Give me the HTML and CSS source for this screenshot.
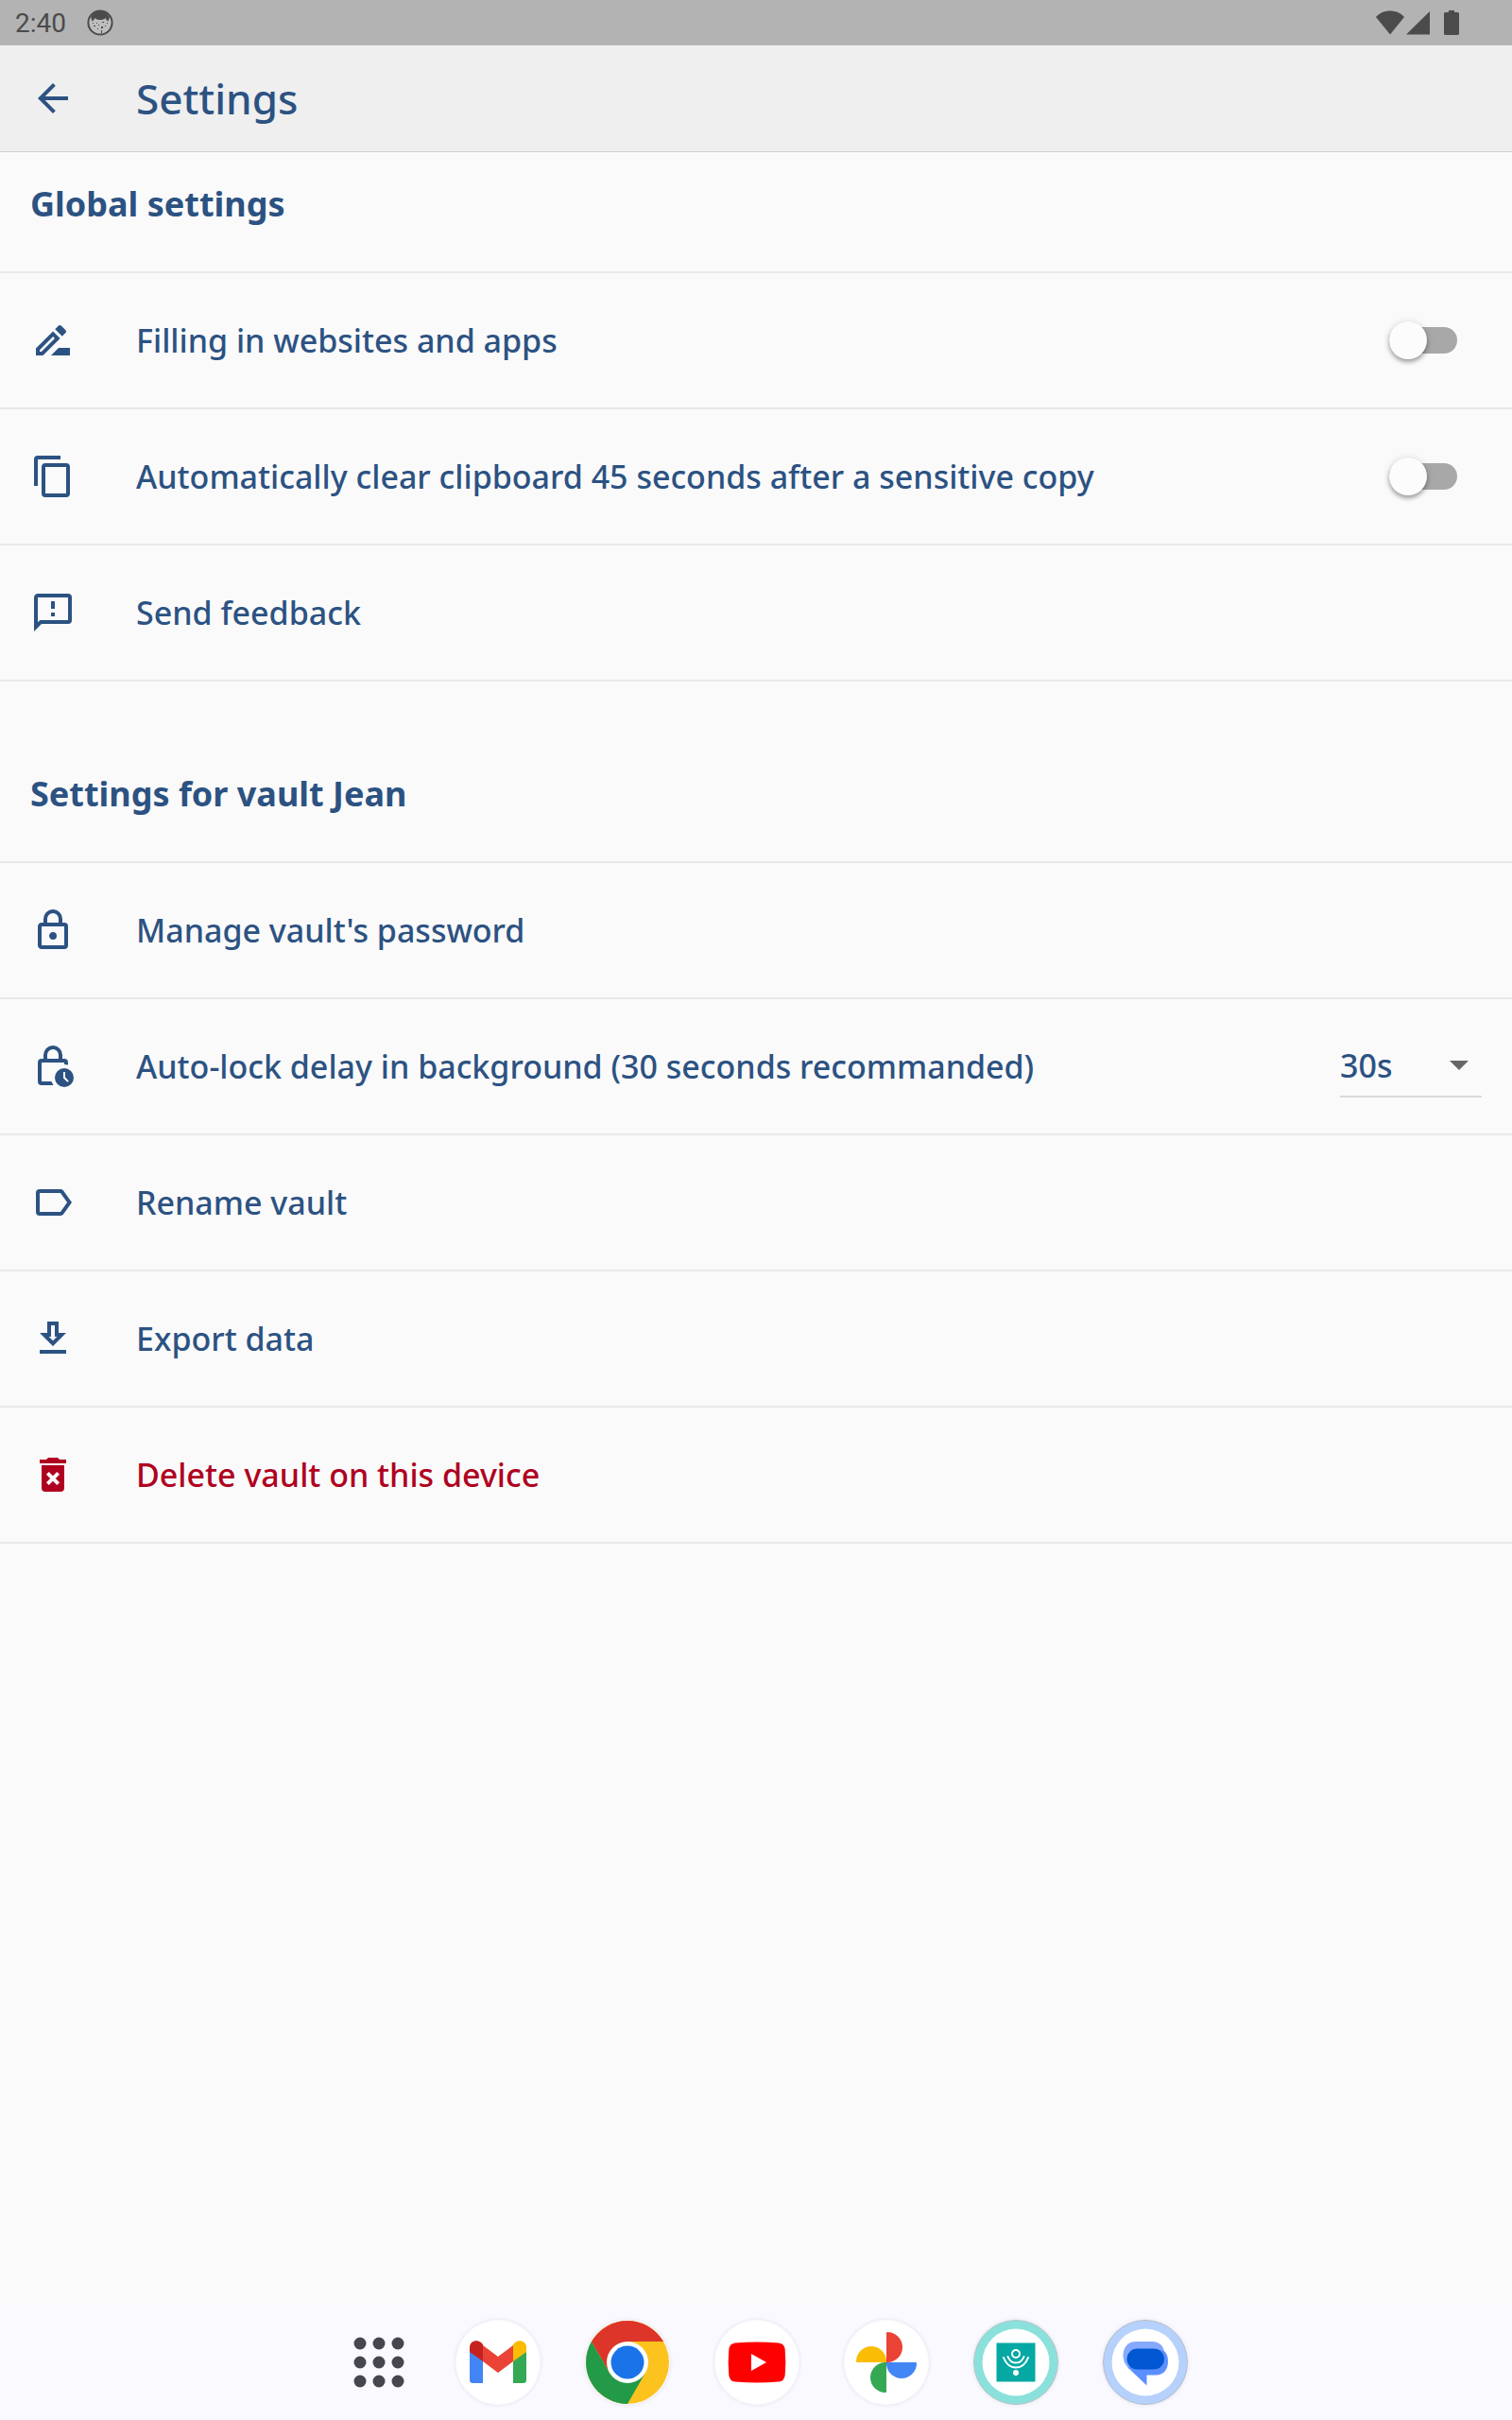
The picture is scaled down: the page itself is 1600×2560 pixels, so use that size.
FILE: index.html
```html
<!DOCTYPE html>
<html lang="en">
  <head>
    <meta charset="UTF-8" />
    <meta name="viewport" content="width=device-width, initial-scale=1.0" />
    <title>Settings</title>
    <link rel="stylesheet" href="styles.css">
  </head>
  <body>
    <!-- Status bar -->
    <div class="status-bar">
      <span class="clock">2:40</span>
      <svg class="face" viewBox="0 0 28 28" aria-hidden="true">
        <circle cx="14" cy="14" r="12.6" fill="#bdbdbd" stroke="#4b4b4b" stroke-width="2" />
        <path fill="#4b4b4b" d="M4 8C7 3.500 10 2 14 2s7 1.500 10 6l-1.500 4.500-2-1.500-.500-2c-2 1.500-3.500 2-6 2s-4-.500-6-2L7.500 11l-2 1.500z" />
        <path fill="#4b4b4b" d="M10 14h1v1h-1zM16 13h2v1h-2zM7 17h2v1H7zM12 16h1v1h-1zM15 18h2v2h-2zM19 17h1v1h-1zM11 20h1v1h-1zM15 22h1v3h-1zM21 14h1v1h-1zM6 14h1v1H6z" />
      </svg>
      <div class="status-icons">
        <svg width="30" height="26" viewBox="0 0 30 26" aria-hidden="true"><path fill="#4b4b4b" d="M15 25.500 0 7C4 2.500 9.500.500 15 .500S26 2.500 30 7z" /></svg>
        <svg width="26" height="26" viewBox="0 0 26 26" aria-hidden="true"><path fill="#4b4b4b" d="M0 25.500 25 1v24.500z" /></svg>
        <svg class="battery" width="16" height="26" viewBox="0 0 16 26" aria-hidden="true"><path fill="#4b4b4b" d="M5 0h6v2h3.500A1.500 1.500 0 0 1 16 3.500v21a1.500 1.500 0 0 1-1.500 1.500h-13A1.500 1.500 0 0 1 0 24.500v-21A1.500 1.500 0 0 1 1.500 2H5z" /></svg>
      </div>
    </div>

    <header class="toolbar">
      <button class="back" aria-label="Back">
        <svg class="icon" viewBox="0 0 24 24"><path d="M20 11H7.830l5.590-5.590L12 4l-8 8 8 8 1.410-1.410L7.830 13H20z" /></svg>
      </button>
      <h1>Settings</h1>
    </header>

    <main>
      <!-- Global settings -->
      <section>
        <h2>Global settings</h2>
        <ul class="list">
          <li class="item">
            <svg class="icon" viewBox="0 0 24 24"><path d="M15,16L11,20H21V16H15M12.06,7.19L3,16.25V20H6.75L15.81,10.94L12.06,7.19M5.92,18H5V17.08L12.06,10L13,10.94L5.92,18M18.71,8.04C19.1,7.65 19.1,7 18.71,6.63L16.37,4.29C16.17,4.09 15.92,4 15.66,4C15.41,4 15.15,4.1 14.96,4.29L13.13,6.12L16.88,9.87L18.71,8.04Z" /></svg>
            <label for="autofill">Filling in websites and apps</label>
            <input class="toggle" type="checkbox" role="switch" id="autofill" />
          </li>
          <li class="item">
            <svg class="icon" viewBox="0 0 24 24"><path d="M19,21H8V7H19M19,5H8A2,2 0 0,0 6,7V21A2,2 0 0,0 8,23H19A2,2 0 0,0 21,21V7A2,2 0 0,0 19,5M16,1H4A2,2 0 0,0 2,3V17H4V3H16V1Z" /></svg>
            <label for="clipboard">Automatically clear clipboard 45 seconds after a sensitive copy</label>
            <input class="toggle" type="checkbox" role="switch" id="clipboard" />
          </li>
          <li>
            <button class="item">
              <svg class="icon" viewBox="0 0 24 24"><path d="M13,10H11V6H13V10M13,14H11V12H13V14M20,2A2,2 0 0,1 22,4V16A2,2 0 0,1 20,18H6L2,22V4C2,2.89 2.9,2 4,2H20M20,4H4V17.17L5.17,16H20V4Z" /></svg>
              <span>Send feedback</span>
            </button>
          </li>
        </ul>
      </section>

      <!-- Vault settings -->
      <section>
        <h2>Settings for vault Jean</h2>
        <ul class="list">
          <li>
            <button class="item">
              <svg class="icon" viewBox="0 0 24 24"><path d="M12,17C10.89,17 10,16.1 10,15C10,13.89 10.89,13 12,13A2,2 0 0,1 14,15A2,2 0 0,1 12,17M18,20V10H6V20H18M18,8A2,2 0 0,1 20,10V20A2,2 0 0,1 18,22H6C4.89,22 4,21.1 4,20V10C4,8.89 4.89,8 6,8H7V6A5,5 0 0,1 12,1A5,5 0 0,1 17,6V8H18M12,3A3,3 0 0,0 9,6V8H15V6A3,3 0 0,0 12,3Z" /></svg>
              <span>Manage vault's password</span>
            </button>
          </li>
          <li class="item">
            <svg class="icon" viewBox="0 0 24 24"><path fill-rule="evenodd" d="M18 8h-1V6A5 5 0 0 0 7 6v2H6a2 2 0 0 0-2 2v10a2 2 0 0 0 2 2h6.300a7 7 0 0 1-1-2H6V10h12v1a7 7 0 0 1 2 .300V10a2 2 0 0 0-2-2zM9 6a3 3 0 0 1 6 0v2H9zM18 13a5 5 0 1 0 0 10 5 5 0 0 0 0-10zM17.500 15h1v2.800l1.900 1.900-.700.700-2.200-2.200z" /></svg>
            <label for="delay">Auto-lock delay in background (30 seconds recommanded)</label>
            <div class="select">
              <select id="delay">
                <option>30s</option>
                <option>1min</option>
                <option>5min</option>
              </select>
              <svg width="20" height="10" viewBox="0 0 20 10" aria-hidden="true"><path fill="#666" d="M0 0h20L10 10z" /></svg>
            </div>
          </li>
          <li>
            <button class="item">
              <svg class="icon" viewBox="0 0 24 24"><path d="M16,17H5V7H16L19.55,12M17.63,5.84C17.27,5.33 16.67,5 16,5H5A2,2 0 0,0 3,7V17A2,2 0 0,0 5,19H16C16.67,19 17.27,18.66 17.63,18.15L22,12L17.63,5.84Z" /></svg>
              <span>Rename vault</span>
            </button>
          </li>
          <li>
            <button class="item">
              <svg class="icon" viewBox="0 0 24 24"><path d="M13,5V11H14.17L12,13.17L9.83,11H11V5H13M15,3H9V9H5L12,16L19,9H15V3M19,18H5V20H19V18Z" /></svg>
              <span>Export data</span>
            </button>
          </li>
          <li>
            <button class="item danger">
              <svg class="icon" viewBox="0 0 24 24"><path d="M6,19A2,2 0 0,0 8,21H16A2,2 0 0,0 18,19V7H6V19M8.46,11.88L9.87,10.47L12,12.59L14.12,10.47L15.53,11.88L13.41,14L15.53,16.12L14.12,17.53L12,15.41L9.88,17.53L8.47,16.12L10.59,14L8.46,11.88M15.5,4L14.5,3H9.5L8.5,4H5V6H19V4H15.5Z" /></svg>
              <span>Delete vault on this device</span>
            </button>
          </li>
        </ul>
      </section>
    </main>

    <!-- Taskbar -->
    <nav class="taskbar">
      <button class="all-apps" aria-label="All apps">
        <svg width="54" height="54" viewBox="0 0 54 54" fill="#46464f">
          <circle cx="7" cy="7" r="6.500" /><circle cx="27" cy="7" r="6.500" /><circle cx="47" cy="7" r="6.500" />
          <circle cx="7" cy="27" r="6.500" /><circle cx="27" cy="27" r="6.500" /><circle cx="47" cy="27" r="6.500" />
          <circle cx="7" cy="47" r="6.500" /><circle cx="27" cy="47" r="6.500" /><circle cx="47" cy="47" r="6.500" />
        </svg>
      </button>
      <button class="app" aria-label="Gmail">
        <svg viewBox="0 0 90 90">
          <circle cx="45" cy="45" r="44" fill="#fff" />
          <path fill="#4285f4" d="M15 33v30.500a3.500 3.500 0 0 0 3.500 3.500H29V43z" />
          <path fill="#34a853" d="M61 43v24h10.500a3.500 3.500 0 0 0 3.500-3.500V33z" />
          <path fill="#ea4335" d="M29 27l16 12 16-12v17L45 56 29 44z" />
          <path fill="#c5221f" d="M15 29c0-6 7-9 12-5l2 2v18L15 34z" />
          <path fill="#fbbc04" d="M75 29c0-6-7-9-12-5l-2 2v18l14-10z" />
        </svg>
      </button>
      <button class="app" aria-label="Chrome">
        <svg viewBox="0 0 90 90">
          <circle cx="45" cy="45" r="44" fill="#fcc31e" />
          <path fill="#dd3529" d="M6.900 23A44 44 0 0 1 83.100 23H45L26 56z" />
          <path fill="#239a48" d="M6.900 23A44 44 0 0 0 45 89l19-33H26z" />
          <circle cx="45" cy="45" r="22" fill="#fff" />
          <circle cx="45" cy="45" r="17.500" fill="#1a73e8" />
        </svg>
      </button>
      <button class="app" aria-label="YouTube">
        <svg viewBox="0 0 90 90">
          <circle cx="45" cy="45" r="44" fill="#fff" />
          <path fill="red" d="M22 24.500q23-2 46 0 6 .500 6.700 7 1.300 13.500 0 27-.700 6.500-6.700 7-23 2-46 0-6-.500-6.700-7-1.300-13.500 0-27 .700-6.500 6.700-7z" />
          <path fill="#fff" d="M39 36v18l16-9z" />
        </svg>
      </button>
      <button class="app" aria-label="Photos">
        <svg viewBox="0 0 90 90">
          <circle cx="45" cy="45" r="44" fill="#fff" />
          <path fill="#ea4335" d="M45 45V14q0-1 1-1a16 16 0 0 1 0 32z" />
          <path fill="#4285f4" d="M45 45h31q1 0 1 1a16 16 0 0 1-32 0z" />
          <path fill="#34a853" d="M45 45v31q0 1-1 1a16 16 0 0 1 0-32z" />
          <path fill="#fbbc04" d="M45 45H14q-1 0-1-1a16 16 0 0 1 32 0z" />
        </svg>
      </button>
      <button class="app" aria-label="Vault">
        <svg viewBox="0 0 90 90">
          <circle cx="45" cy="45" r="44.500" fill="#8ae1db" stroke="#b4c4c6" />
          <circle cx="45" cy="45" r="35.500" fill="#fff" />
          <path fill="#05a8a3" d="M24.500 24.500h41v41h-41z" />
          <g fill="none" stroke="#fff" stroke-width="2" stroke-linecap="round">
            <circle cx="45" cy="36" r="4" />
            <path d="M36.500 39q2.500 6.500 8.500 6.500t8.500-6.500" />
            <path d="M32 40q4 10.500 13 10.500T58 40" />
          </g>
          <circle cx="45" cy="56" r="3" fill="#fff" />
        </svg>
      </button>
      <button class="app" aria-label="Messages">
        <svg viewBox="0 0 90 90">
          <circle cx="45" cy="45" r="44.500" fill="#b5d1fc" stroke="#b4bccb" />
          <circle cx="45" cy="45" r="35.500" fill="#fff" />
          <path fill="#85a9ff" d="M35 23h17c8 0 13 5 13 13L45 52H28c-4-4-6.500-8-6.500-14.500C21.500 29 27 23 35 23z" />
          <path fill="#5c8fff" d="M64.500 32.500c3 3 4.500 6 4.500 11.500 0 9-5 14.500-13 14.500H46.500v11L27 51c7-16 24-21 37.500-18.500z" />
          <rect x="25.500" y="30.500" width="39.500" height="22" rx="11" fill="#0057d1" />
        </svg>
      </button>
    </nav>
  </body>
</html>
```
FILE: styles.css
```css
* {
  box-sizing: border-box;
  margin: 0;
  padding: 0;
}

body {
  min-height: 100vh;
  display: flex;
  flex-direction: column;
  background-color: #fafafa;
  color: #2c5282;
  font-family: "Noto Sans", sans-serif;
  font-size: 34px;
  font-weight: 500;
}

button,
select {
  border: none;
  background: none;
  color: inherit;
  font: inherit;
  cursor: pointer;
}

.icon {
  width: 48px;
  height: 48px;
  flex: none;
  display: block;
  fill: currentColor;
}

/* Status bar */
.status-bar {
  height: 48px;
  padding: 0 56px 0 16px;
  display: flex;
  align-items: center;
  background-color: #b3b3b3;
  color: #4b4b4b;
  font-family: Roboto, sans-serif;
  font-size: 28px;
  font-weight: 400;
}

.face {
  width: 28px;
  height: 28px;
  margin-left: 22px;
}

.status-icons {
  margin-left: auto;
  display: flex;
  align-items: center;
  gap: 2px;
}

.battery {
  margin-left: 12px;
}

/* Toolbar */
.toolbar {
  height: 113px;
  padding: 0 32px;
  display: flex;
  align-items: center;
  gap: 64px;
  background-color: #efefef;
  border-bottom: 1px solid #cfcfcf;
}

h1 {
  font-size: 44px;
  font-weight: 500;
  line-height: 60px;
}

/* Settings */
main {
  flex: 1;
}

h2 {
  height: 128px;
  padding: 30px 32px;
  border-bottom: 2px solid #e9e9e9;
  font-size: 36px;
  font-weight: 700;
  line-height: 50px;
}

section + section {
  padding-top: 64px;
}

.list {
  list-style: none;
}

.item {
  width: 100%;
  min-height: 144px;
  padding: 0 32px;
  display: flex;
  align-items: center;
  gap: 64px;
  border-bottom: 2px solid #e9e9e9;
  text-align: left;
}

.item label {
  flex: 1;
}

.danger {
  color: #b00020;
}

.toggle {
  appearance: none;
  width: 72px;
  height: 28px;
  margin-right: 26px;
  display: flex;
  align-items: center;
  border-radius: 14px;
  background-color: #a8a8a8;
  cursor: pointer;
}

.toggle::before {
  content: "";
  width: 40px;
  height: 40px;
  flex: none;
  border-radius: 50%;
  background-color: #fcfcfc;
  box-shadow: 0 3px 4px rgba(0, 0, 0, 0.3), 0 1px 8px rgba(0, 0, 0, 0.14);
}

.toggle:checked {
  justify-content: flex-end;
}

.select {
  width: 150px;
  display: grid;
  align-items: center;
  border-bottom: 2px solid #dadada;
}

.select select,
.select svg {
  grid-area: 1 / 1;
}

.select select {
  appearance: none;
  width: 100%;
  height: 64px;
}

.select svg {
  justify-self: end;
  margin-right: 14px;
  pointer-events: none;
}

/* Taskbar */
.taskbar {
  height: 122px;
  padding-left: 24px;
  display: flex;
  align-items: center;
  justify-content: center;
  gap: 47px;
  background-color: #f9f9ff;
}

.all-apps,
.all-apps svg,
.app svg {
  display: block;
}

.all-apps {
  padding: 0 7px;
}

.app {
  width: 90px;
  height: 90px;
  border-radius: 50%;
  box-shadow: 0 0 4px rgba(0, 0, 0, 0.1);
}
```
